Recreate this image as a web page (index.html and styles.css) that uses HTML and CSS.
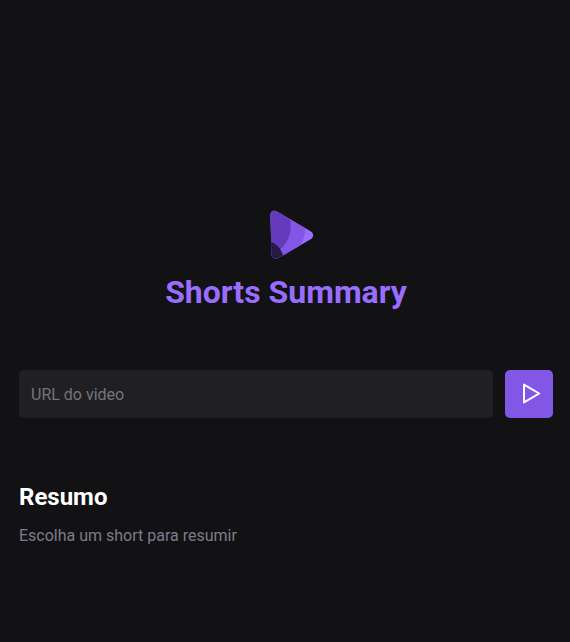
FILE: index.html
```html
<!DOCTYPE html>
<html lang="pt-BR">
<head>
<meta charset="utf-8">
<title>Shorts Summary</title>
<link rel="stylesheet" href="styles.css">
</head>
<body>
<main class="app">
  <header class="header">
    <svg class="logo" width="44" height="50" viewBox="0 0 44 50" aria-hidden="true">
      <defs>
        <clipPath id="shape"><path d="M0.5 5C0.4 1.5 3.8-0.2 6.9 1.5L41 21.6C43.9 23.3 43.9 27.2 41.1 29L9.4 47.5C5.2 49.8 1.5 48 1.4 44Z"/></clipPath>
      </defs>
      <g clip-path="url(#shape)">
        <rect class="logo-light" width="44" height="50"/>
        <circle class="logo-mid" cx="-3" cy="16" r="38.6"/>
        <circle class="logo-dark" cx="-9.5" cy="16.5" r="30.3"/>
        <circle class="logo-shade" cx="-6" cy="50" r="19.5"/>
      </g>
    </svg>
    <h1 class="title">Shorts Summary</h1>
  </header>
  <form class="search">
    <input class="url" type="text" placeholder="URL do video">
    <button class="submit" type="button" aria-label="Resumir">
      <svg width="48" height="48" viewBox="0 0 48 48"><path d="M19 14.6V32.4L34.2 23.5Z"/></svg>
    </button>
  </form>
  <section class="summary">
    <h2 class="summary-title">Resumo</h2>
    <p class="summary-text">Escolha um short para resumir</p>
  </section>
</main>
</body>
</html>
```
FILE: styles.css
```css
* {
  box-sizing: border-box;
  margin: 0;
  padding: 0;
}

body {
  background: #121214;
  color: #fff;
  font-family: Roboto, sans-serif;
  font-size: 16px;
}

.app {
  min-height: 642px;
  padding: 210px 17px 0 19px;
}

.header {
  display: flex;
  flex-direction: column;
  align-items: center;
}

.logo {
  display: block;
  margin-left: 12px;
}

.logo-light { fill: #996dff; }
.logo-mid { fill: #8257e5; }
.logo-dark { fill: #633bbc; }
.logo-shade { fill: #271a45; }

.title {
  margin-top: 13px;
  color: #996dff;
  font-size: 32px;
  font-weight: 700;
  line-height: 38px;
}

.search {
  display: flex;
  gap: 12px;
  margin-top: 59px;
}

.url {
  flex: 1;
  min-width: 0;
  height: 48px;
  padding: 0 12px;
  border: 0;
  border-radius: 5px;
  background: #202024;
  color: #fff;
  font: inherit;
}

.url::placeholder {
  color: #757575;
}

.submit {
  width: 48px;
  height: 48px;
  border: 0;
  border-radius: 5px;
  background: #8257e5;
}

.submit svg {
  display: block;
  fill: none;
  stroke: #fff;
  stroke-width: 2;
  stroke-linejoin: round;
}

.summary {
  margin-top: 65px;
}

.summary-title {
  font-size: 24px;
  font-weight: 700;
  line-height: 28px;
}

.summary-text {
  margin-top: 15px;
  color: #7c7c8a;
  line-height: 19px;
}
```
